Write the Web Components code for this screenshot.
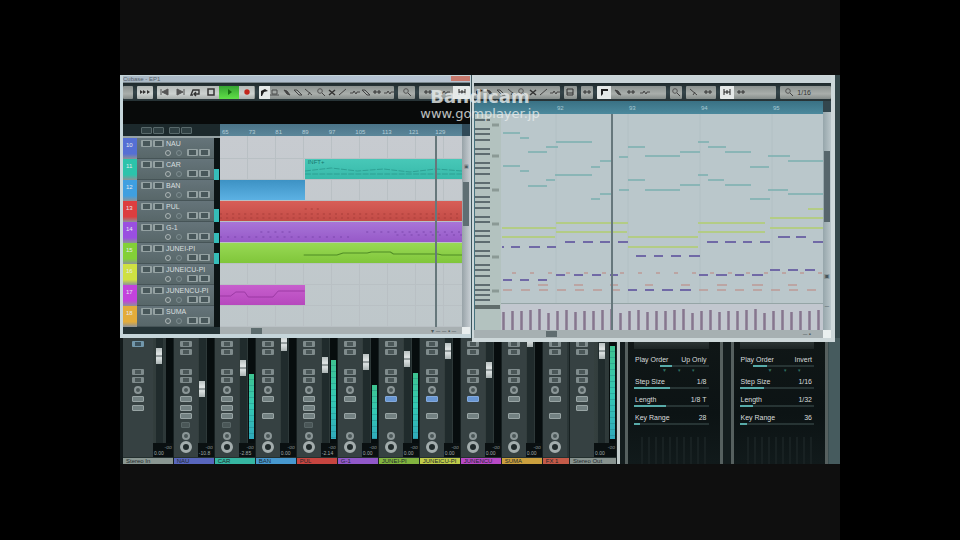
<!DOCTYPE html>
<html lang="en">
<head>
<meta charset="utf-8">
<title>Music studio</title>
<style>
html,body{margin:0;height:100%;background:#000}
body{font-family:"Liberation Sans",Arial,sans-serif;color:#dde2e2}
</style>
</head>
<body>
<studio-app></studio-app>
<script>
const BASE = `<style>
*{box-sizing:border-box}
button{appearance:none;border:0;padding:0;margin:0;background:none;font:inherit;color:inherit;display:flex;align-items:center;justify-content:center;min-width:0}
svg{display:block}
</style>`;
function define(name, render){
  customElements.define(name, class extends HTMLElement{
    constructor(){ super(); this.attachShadow({mode:'open'}); }
    connectedCallback(){ this.shadowRoot.innerHTML = BASE + render(this); }
  });
}
const ICONS = {
  ff:'<path d="M1 3v4l3-2zM4 3v4l3-2zM8 3v4l3-2z" fill="#333"/>',
  rew:'<path d="M2 2v6M9 2v6L3 5z" stroke="#555" fill="#555"/>',
  fwd:'<path d="M10 2v6M3 2v6l6-3z" stroke="#555" fill="#555"/>',
  loop:'<path d="M3 8H1l2-5h6v4H4M6 5L4 7l2 2" stroke="#333" stroke-width="1.4" fill="none"/>',
  stop:'<rect x="3" y="2" width="6" height="6" fill="none" stroke="#333" stroke-width="1.5"/>',
  play:'<path d="M5 2v6l4-3z" fill="#17700f"/>',
  rec:'<circle cx="6" cy="5" r="2.7" fill="#c3261c"/>',
  arrow:'<path d="M3 9V4l4-2 3 2-4 1-2 4z" fill="#222"/>',
  rect:'<path d="M3 3h5v4H3zM1 8h9" stroke="#4a4d4c" fill="none"/>',
  pen:'<path d="M3 3l3 1 3 4-3-1z" fill="#444" stroke="#444"/>',
  erase:'<path d="M2 3l5 5h3L5 3z" fill="none" stroke="#444"/>',
  cut:'<path d="M2 2l7 6M5 8l2-3" stroke="#444" fill="none"/>',
  zoom:'<circle cx="5" cy="4" r="2.3" fill="none" stroke="#555"/><path d="M7 6l3 3" stroke="#444"/>',
  mute:'<path d="M3 3l6 5M9 3L3 8" stroke="#333" stroke-width="1.5"/>',
  line:'<path d="M2 8l7-6" stroke="#444"/>',
  wave:'<path d="M1 6h3l1-2 2 3 1-2h3" stroke="#444" fill="none"/>',
  box:'<path d="M3 2h6v6H3zM3 6h6" stroke="#333" fill="none"/>',
  bars:'<path d="M2 5h8M4 3v4M8 3v4" stroke="#333"/>',
  note:'<path d="M3 9V2h7v2H5v3" fill="#222"/>',
  snap:'<path d="M3 2v6M9 2v6M3 5h6M6 3v4" stroke="#222" fill="none"/>',
  none:''
};
const icon = n => `<svg width="12" height="10" viewBox="0 0 12 10" aria-hidden="true">${ICONS[n]}</svg>`;

define('tool-group', el => {
  const items = el.getAttribute('items').split(' ').map(s => {
    const [n, tone] = s.split(':');
    return `<button class="${tone||''}" aria-label="${n}">${icon(n)}</button>`;
  }).join('');
  return `<style>
  :host{display:flex;flex:${el.getAttribute('grow')} 1 0;min-width:0;height:13px;border-radius:1px;overflow:hidden;background:linear-gradient(#8b9290,#a9aeab 60%,#858c8a);font-size:7px;color:#333;align-items:stretch}
  button{flex:1 1 0}
  svg{flex:none}
  .w{background:linear-gradient(#b4bab8,#cdd2d0 60%,#a8aeac)}
  .g{background:linear-gradient(#35a332,#60df48);flex-grow:1.3}
  .h{background:#e5e9e8}
  .text{display:flex;align-items:center}
  .text.on{padding-right:20px}
  </style>${items}<div class="text ${el.textContent?'on':''}"><slot></slot></div>`;
});

define('tool-bar', () => `<style>
  :host{display:flex;align-items:center;gap:4px;height:18px;background:linear-gradient(#1f2a2c,#35454a 50%,#263235);overflow:hidden}
</style><slot></slot>`);

define('track-header', el => {
  const b = '<button aria-label="option"></button>';
  return `<style>
  :host{display:grid;grid-template-columns:14px 1fr 6px;height:21px;min-width:0}
  .tag{background:linear-gradient(${el.getAttribute('color')},${el.getAttribute('color')} 75%,#8c9298);font-size:6px;line-height:8px;padding:3px 0 0 3px;color:#e4e9ee}
  .body{background:linear-gradient(#65747a,#586769);border-bottom:1px solid #465457;padding:1px 4px 1px 4px;min-width:0;overflow:hidden}
  .row{display:flex;align-items:center;gap:1px;height:9px}
  .row.two{justify-content:flex-end}
  button{width:11px;height:7px;border:2px solid #94a1a2;border-width:1px 2px;background:#48575a;border-radius:1px;flex:none}
  i{width:6px;height:6px;border:1px solid #adb6b6;border-radius:50%;margin-right:4px;flex:none}
  i+i{border-color:#7e8d90}
  .name{font-size:7px;line-height:9px;color:#d7dedf;margin-left:1px;white-space:nowrap}
  .meter{background:#0c1415;display:flex;align-items:flex-end}
  .meter b{width:5px;height:${el.getAttribute('level')}px;background:#35bdb9}
  </style><div class="tag">${el.getAttribute('n')}</div>
  <div class="body"><div class="row">${b}${b}<span class="name"><slot></slot></span></div><div class="row two"><i></i><i></i>${b}${b}</div></div>
  <div class="meter"><b></b></div>`;
});

define('track-clip', el => `<style>
  :host{display:block;height:20px;margin-left:${el.getAttribute('from')||0}%;width:${el.getAttribute('span')}%;background:linear-gradient(${el.getAttribute('c1')},${el.getAttribute('c2')});overflow:hidden;font-size:6px;line-height:7px;color:#16766f;position:relative}
  svg{position:absolute;inset:0;width:100%;height:100%}
  slot{display:block;padding-left:3px}
  </style><slot></slot><svg viewBox="0 0 240 20" preserveAspectRatio="none"><path d="${el.getAttribute('path')||''}" fill="none" stroke="${el.getAttribute('ink')}" stroke-width="1" ${el.getAttribute('dash')?`stroke-dasharray="${el.getAttribute('dash')}"`:''}/></svg>`);

define('project-window', () => {
  const T = [['NAU','#5570d4',0,'10'],['CAR','#2cc3ab',11,'11'],['BAN','#3f9fe0',0,'12'],['PUL','#dc3e3f',13,'13'],['G-1','#9a4fe0',10,'14'],['JUNEI-PI','#83d038',11,'15'],['JUNEICU-PI','#cfe043',0,'16'],['JUNENCU-PI','#c342dc',0,'17'],['SUMA','#e3ac3a',0,'18']];
  return `<style>
  :host{display:flex;flex-direction:column;background:#c5d5da;padding:1px 1px 4px 3px;position:relative;min-width:0;border-right:1px solid #3d555c}
  .title{height:7px;background:linear-gradient(90deg,#a9b8c4,#b4c3d3 70%,#b6c2cf);font-size:6px;line-height:7px;color:#56606b;display:flex;justify-content:space-between;overflow:hidden;border-bottom:1px solid #7c898f}
  .title button{width:19px;background:#c7796d;height:5px}
  .info{background:#080a0a;height:23px}
  .main{display:grid;grid-template-columns:97px 1fr 8px;background:#0c1415}
  .heads{background:#1c292c}
  .top{height:14px;display:flex;align-items:center;gap:1px;padding-left:18px;border-bottom:2px solid #96a2a4}
  .top button{width:11px;height:7px;border:1px solid #59696b;border-radius:1px;background:#2f3f42}
  .top button:nth-child(3){margin-left:4px}
  .ruler{height:12px;background:linear-gradient(#4a7488,#5b8699);display:grid;grid-template-columns:repeat(9,1fr);font-size:6px;line-height:16px;color:#b5ced8;padding-left:2px}
  .lanes{position:relative;padding-top:2px;background:repeating-linear-gradient(90deg,transparent 0 27px,#b9c0c4 27px 28px),linear-gradient(#c7cbd0,#bec7ca)}
  .lane{height:21px;border-bottom:1px solid #b9c0c4}
  .cur{position:absolute;left:89%;top:0;bottom:0;width:2px;background:#66777b}
  .vs{background:linear-gradient(90deg,#98a3a8,#c4cbd0);display:flex;flex-direction:column;align-items:center;font-size:5px;color:#4d5a60}
  .vs:before{content:"";height:12px;width:100%;background:#304a58}
  .vs b{width:6px;height:44px;background:#5f6e73;margin-top:13px}
  .hs{display:grid;grid-template-columns:97px 1fr 8px;height:7px;background:#a8b0b2}
  .hs .l{background:#253437}
  .hs .r{display:flex;align-items:center;font-size:6px;color:#4e5b5d}
  .hs .r b{margin-left:13%;width:11px;height:6px;background:#5c6b6d}
  .hs .r span{margin-left:auto;padding-right:6px}
  .hs .e{background:#e9eeee}
  .sp{height:27px}
  </style>
  <div class="title"><span>Cubase - EP1</span><button aria-label="close"></button></div>
  <tool-bar><tool-group grow="10" items="none"></tool-group><tool-group grow="16" items="ff:w"></tool-group>
  <tool-group grow="96" items="rew:w fwd:w loop:w stop:w play:g rec:w"></tool-group>
  <tool-group grow="134" items="arrow:h rect pen erase cut zoom mute line wave erase bars wave"></tool-group>
  <tool-group grow="17" items="zoom"></tool-group><tool-group grow="50" items="bars wave snap:h"></tool-group></tool-bar>
  <div class="info"></div>
  <div class="main"><div class="heads"><div class="top">${'<button aria-label="track tool"></button>'.repeat(4)}</div>
  ${T.map(t=>`<track-header color="${t[1]}" level="${t[2]}" n="${t[3]}">${t[0]}</track-header>`).join('')}</div>
  <div><div class="ruler">${[65,73,81,89,97,105,113,121,129].map(n=>`<span>${n}</span>`).join('')}</div>
  <div class="lanes"><div class="lane"></div>
  <div class="lane"><track-clip from="35" span="65" c1="#48c8b8" c2="#37b9a9" ink="#2a998d" path="M0 12L40 9 80 12 120 10 160 13 200 10 240 12M0 15H240" dash="9 2">INFT+</track-clip></div>
  <div class="lane"><track-clip span="35" c1="#3d92c4" c2="#5cb1e3" ink="#3d92c4"></track-clip></div>
  <div class="lane"><track-clip span="100" c1="#d85e57" c2="#c24b46" ink="#a93e3b" path="M84 8H102M0 13H240M0 17H240" dash="2 4"></track-clip></div>
  <div class="lane"><track-clip span="100" c1="#a875d8" c2="#9759c8" ink="#7c47ad" path="M40 10H70M145 10H240M0 15H130M175 13H240" dash="2 5"></track-clip></div>
  <div class="lane"><track-clip span="100" c1="#98d955" c2="#80c63a" ink="#4f8b25" path="M83 12H116L122 10H146L150 9H169L172 11H216L220 12H240"></track-clip></div>
  <div class="lane"></div>
  <div class="lane"><track-clip span="35" c1="#c75fcd" c2="#b648bd" ink="#8c2e94" path="M0 11H30L45 7H70L80 12H150L165 6H240"></track-clip></div>
  <div class="lane"></div><div class="cur"></div></div></div>
  <div class="vs"><div class="sp"></div>▣<b></b></div></div>
  <div class="hs"><div class="l"></div><div class="r"><b></b><span>▾ ─ ─ ▪ ─</span></div><div class="e"></div></div>`;
});

define('piano-roll', () => {
  const seg = (y, list) => list.map(([a,b]) => `M${a} ${y}H${b}`).join('');
  const every = (y, a, b, w) => { let s=''; for(let x=a;x<b;x+=18) s+=`M${x} ${y}h${w}`; return s; };
  const teal = [[133,503,520],[138,520,529],[152,528,547],[147,546,558],[142,556,592],[157,619,628],[147,628,645],[156,645,680],[152,680,700],[142,698,709],[147,708,726],[152,725,751],[167,750,769],[156,768,790],[161,788,823],[166,503,520],[171,520,529],[186,528,547],[180,546,555],[175,555,592],[167,591,600],[161,600,613],[199,591,600],[194,600,613],[190,619,629],[180,628,645],[190,645,680],[185,680,700],[175,698,708],[180,708,724],[185,725,751],[199,750,770],[190,768,788],[194,788,823]].map(([y,a,b])=>`M${a} ${y}H${b}`).join('');
  const green = seg(228,[[502,556],[770,823]])+seg(237,[[502,555],[628,698]])+seg(223,[[556,628],[698,765]])+seg(232,[[556,627],[698,765]])+'M628 247H698M770 218H823M808 209H823';
  const purple = seg(247,[[502,504],[511,520],[529,540],[547,556]])+seg(242,[[565,575],[583,593],[600,610],[618,628],[707,718],[725,736],[743,752],[760,770],[813,823]])+seg(256,[[636,646],[654,663],[671,681],[689,700]])+seg(237,[[778,790],[796,806]])
   +seg(280,[[503,512],[520,529],[538,547]])+seg(275,[[556,565],[574,583],[592,601],[610,618],[699,708],[716,727],[735,744],[752,763]])+seg(290,[[628,637],[645,654],[662,673],[680,691]])+seg(270,[[770,780],[788,798],[805,815]]);
  const red = every(290,503,620,9)+every(290,699,815,9)+seg(285,[[538,548],[574,583],[610,618],[645,653],[681,690],[717,727],[752,763],[788,797]])+every(273,512,823,4);
  let vel='', keys='', grid='';
  for(let i=0;i<36;i++) vel += `M${503.5+i*9} ${[312,310,311,311,309,310,311,313][(i*3)%8]}V330`;
  for(let L=123;L<=310;L+=34) for(const d of [3,8,17,23,28]) if(L-d>115) keys += `M0 ${L-d}H15`;
  keys += 'M0 295H15M0 300H15';
  for(let x=556;x<823;x+=72) grid += `M${x} 114V303`;
  return `<style>
  :host{display:grid;grid-template-columns:26px 1fr;height:216px;background:#b9c6c8}
  svg{width:100%;height:216px}
  </style>
  <svg viewBox="0 114 26 216" preserveAspectRatio="none"><path d="M0 114h26v216H0z" fill="#b3c2bf"/><path d="${keys}" stroke="#5e6c70" stroke-width="2"/><path d="M17 125h7M17 156h7M17 190h7M17 224h7M17 257h7M17 291h7" stroke="#8b9995" stroke-width="3"/><path d="M0 305h25v4H0z" fill="#606c6b"/></svg>
  <svg viewBox="501 114 322 216" preserveAspectRatio="none"><path d="M501 114h322v190H501z" fill="#bac7cb"/><path d="M501 304h322v26H501z" fill="#c2c7cf"/><path d="${grid}" stroke="#b2c0c4"/><path d="M501 303.5H823" stroke="#95a5a6"/>
  <path d="${teal}" stroke="#7bb0b0" stroke-width="1.4"/><path d="${green}" stroke="#b3cc85" stroke-width="2"/><path d="${red}" stroke="#bd9b96" stroke-width="1.5"/><path d="${purple}" stroke="#7069a6" stroke-width="2"/><path d="${vel}" stroke="#86768f" stroke-width="2.5"/><path d="M612 114V330" stroke="#66777c" stroke-width="2"/></svg>`;
});

define('editor-window', () => `<style>
  :host{display:flex;flex-direction:column;background:#cdd8da;padding:1px 4px 4px 2px;min-width:0}
  .title{height:7px;background:#c9d4d8}
  .main{display:grid;grid-template-columns:1fr 8px;border-left:1px solid #45727e}
  .ruler{height:13px;background:linear-gradient(#397184,#4c899d);display:grid;grid-template-columns:82px repeat(3,1fr) 50px;font-size:6px;line-height:15px;color:#a8c9d2}
  .vs{background:linear-gradient(90deg,#96a6ab,#b9c5c9);display:flex;flex-direction:column;align-items:center;font-size:6px;line-height:8px;color:#48565b}
  .vs:before{content:"";height:11px;width:100%;background:#33464d}
  .vs b{height:71px;width:6px;background:#57666c;margin:39px 0 50px}
  .vs span+span{margin-top:22px}
  .hs{display:grid;grid-template-columns:1fr 8px;height:8px;background:#a6b0b2;font-size:6px;line-height:7px;color:#4e5b5d;padding-left:25px}
  .hs div{display:flex;justify-content:space-between;padding-right:12px;align-items:center}
  .hs b{margin-left:15%;width:11px;height:6px;background:#606d70}
  .hs i{background:#eaf0f0}
  </style><div class="title"></div>
  <tool-bar><tool-group grow="88" items="arrow pen erase cut zoom mute line wave"></tool-group><tool-group grow="13" items="box"></tool-group><tool-group grow="13" items="bars"></tool-group><tool-group grow="70" items="note:h pen bars wave none"></tool-group><tool-group grow="13" items="zoom"></tool-group><tool-group grow="30" items="cut bars"></tool-group><tool-group grow="58" items="snap:h bars none none"></tool-group><tool-group grow="52" items="zoom">1/16</tool-group></tool-bar>
  <div class="main"><div><div class="ruler"><span></span><span>92</span><span>93</span><span>94</span><span>95</span></div><piano-roll></piano-roll></div><div class="vs"><b></b><span>▣</span><span>─</span></div></div>
  <div class="hs"><div><b></b><span>─ ▪</span></div><i></i></div>`);

define('mixer-strip', el => {
  const a = n => el.getAttribute(n);
  const on = s => (a('parts')||'').includes(s);
  const btn = (h, k='') => `<div style="height:${h}px"><button class="${k}" aria-label="channel switch"></button></div>`;
  const gap = h => `<div style="height:${h}px"></div>`;
  const bus = on('m');
  const fad = a('fader');
  return `<style>
  :host{display:grid;grid-template-columns:24px 1fr;grid-template-rows:119px 7px;flex:${a('grow')} 1 0;min-width:0;height:126px;background:linear-gradient(90deg,#303b3c,#35403f 52%,#293435);border-right:1px solid #172021;overflow:visible}
  :host([edge]){grid-template-columns:${a('edge')}px 1fr}
  .ch{background:#364142;display:flex;flex-direction:column;padding-top:2px;min-width:0}
  .ch div{display:flex;align-items:center;justify-content:center;flex:none}
  .ch button{width:12px;height:6px;border:1px solid #7f8b8c;border-width:1px 3px;background:#4a5657;border-radius:1px}
  .ch .f{background:#728081;border-color:#98a4a4;border-width:1px}
  .ch .b{background:#6896d2;border-color:#83a9dc;border-width:1px}
  .ch .t{background:#3c535f;border-color:#7297ab}
  .ch .d{border-color:#596667;border-width:1px;width:9px}
  .ch .k{width:8px;height:8px;border:2px solid #8b9697;border-radius:50%}
  .ch .K{width:12px;height:12px;border:3px solid #a3adad;border-radius:50%;background:#202a2b}
  .rt{display:grid;grid-template-columns:1fr 7px;grid-template-rows:105px 14px;min-width:0}
  .fw{display:flex;justify-content:center;min-width:0}
  input{appearance:none;writing-mode:vertical-lr;direction:rtl;width:7px;height:114px;margin:-8px 0 0;background:#202b2c;border:0;padding:0;flex:none}
  input::-webkit-slider-thumb{appearance:none;width:6px;height:16px;background:linear-gradient(#b8c0c0,#e2e7e7 40%,#737d7e 50%,#dde3e3 60%,#aab3b3)}
  .mt{background:#070d0e;display:flex;align-items:flex-end;justify-content:center;padding-bottom:4px}
  .mt b{width:5px;height:${a('level')||0}px;background:repeating-linear-gradient(transparent 0 5px,#1a6d7250 5px 6px),linear-gradient(#3ec390,#35c9b4 50%,#30a9bb)}
  .val{grid-column:1/3;background:#0a1011;font-size:5px;line-height:6px;color:#a1aaaa;padding:1px 0 0 1px;white-space:nowrap}
  .val span{display:block}
  .val span:first-child{text-align:right;padding-right:1px;color:#7f8989}
  .lab{grid-column:1/3;background:${a('color')};font-size:6px;line-height:6px;padding-left:3px;color:#20282c;border-top:1px solid #24302f;white-space:nowrap}
  </style>
  <div class="ch">${btn(8,on('i')?'t':'')}${on('i')?gap(8):btn(8)}${gap(12)}${btn(8)}${btn(8)}${btn(11,'k')}${btn(8,on('b')?'b':'f')}${on('s')||bus?btn(9,'f'):gap(9)}${bus?'':btn(8,'f')+(on('s')?btn(10,'d'):gap(10))+btn(11,'k')+btn(12,'K')}</div>
  ${fad?`<div class="rt"><div class="fw"><input type="range" aria-label="volume" min="0" max="98" value="${98-(fad-330)}"></div><div class="mt"><b></b></div><div class="val"><span>-oo</span><span>${a('db')||'0.00'}</span></div></div>`:'<div></div>'}
  <div class="lab"><slot></slot></div>`;
});

define('arp-panel', el => `<style>
  :host{display:block;flex:1 1 0;min-width:0;height:126px;background:linear-gradient(#101717,#0c1314 60%,#111a1b);border:solid #56605f;border-width:0 3px;padding:3px 11px 0 6px;font-size:7px;color:#d8dddd}
  .cap{height:8px;background:linear-gradient(#2e3737,#1c2424);margin-bottom:7px}
  .r{height:18px}
  .r.first{height:22px}
  .t{display:flex;justify-content:space-between;line-height:8px;height:9px;padding:0 2px 0 1px}
  input{appearance:none;display:block;width:100%;height:2px;margin:0;background:linear-gradient(90deg,transparent var(--a),#58aba9 var(--a) var(--b),#273434 var(--b))}
  input::-webkit-slider-thumb{appearance:none;width:0;height:0}
  .tri{font-size:5px;line-height:7px;color:#2e7163;display:flex;justify-content:space-between;padding:0 13px 0 28px}
  .fins{height:27px;margin:5px 2px 0;background:repeating-linear-gradient(90deg,transparent 0 5px,#182122 5px 7px)}
  </style><div class="cap"></div>
  ${el.getAttribute('rows').split(';').map((s,i)=>{const [n,v,a,b]=s.split(',');return `<div class="r ${i?'':'first'}"><div class="t"><label for="p${i}">${n}</label><span>${v}</span></div><input id="p${i}" type="range" style="--a:${a}%;--b:${b}%">${i?'':'<div class="tri"><span>▼</span><span>▾</span><span>▾</span></div>'}</div>`}).join('')}
  <div class="fins"></div>`);

define('studio-app', () => `<style>
  :host{display:block;height:100%;padding:0 12.5%;background:#000;overflow:hidden}
  .stage{height:100%;background:#0f0f0f;padding-top:75px;position:relative}
  .screen{background:#34474a}
  .wins{display:grid;grid-template-columns:352fr 363fr;align-items:start;padding-right:5px;position:relative;z-index:1}
  .low{display:grid;grid-template-columns:500fr 220fr;margin-top:-4px;background:#11191a}
  .mix{display:flex;min-width:0;padding-left:3px;border-right:3px solid #c1cbcb}
  .arps{display:flex;gap:8px;padding:0 12px 0 5px;min-width:0;background:linear-gradient(90deg,#141d1e 94%,#465b5e 95%)}
  .mark{position:absolute;z-index:2;top:87px;left:50%;translate:-50% 0;text-align:center;color:#e7ecec;opacity:.8;font:bold 18px/20px "DejaVu Sans",sans-serif}
  .mark small{display:block;font-size:13px;font-weight:400;line-height:13px}
  </style>
  <div class="stage"><div class="screen"><div class="wins"><project-window></project-window><editor-window></editor-window></div>
  <div class="low"><div class="mix">
  <mixer-strip grow="51" edge="30" parts="mi" fader="348" color="#8a9792">Stereo In</mixer-strip>
  <mixer-strip grow="41" parts="s" fader="381" db="-10.8" color="#5866bd">NAU</mixer-strip>
  <mixer-strip grow="41" parts="s" fader="360" level="65" db="-2.85" color="#36b6a2">CAR</mixer-strip>
  <mixer-strip grow="41" fader="335" color="#4798cf">BAN</mixer-strip>
  <mixer-strip grow="41" parts="s" fader="357" level="79" db="-2.14" color="#c74540">PUL</mixer-strip>
  <mixer-strip grow="41" fader="354" level="54" color="#9158c9">G-1</mixer-strip>
  <mixer-strip grow="41" parts="b" fader="351" level="66" color="#82b43f">JUNEI-PI</mixer-strip>
  <mixer-strip grow="41" parts="b" fader="343" color="#bfcb49">JUNEICU-PI</mixer-strip>
  <mixer-strip grow="41" parts="b" fader="362" color="#b849c6">JUNENCU</mixer-strip>
  <mixer-strip grow="41" fader="331" color="#cba03e">SUMA</mixer-strip>
  <mixer-strip grow="27" color="#c45a48">FX 1</mixer-strip>
  <mixer-strip grow="47" edge="24" parts="m" fader="343" level="93" color="#87928e">Stereo Out</mixer-strip>
  </div><div class="arps">
  <arp-panel rows="Play Order,Up Only,34,51;Step Size,1/8,0,48;Length,1/8 T,0,43;Key Range,28,0,8"></arp-panel>
  <arp-panel rows="Play Order,Invert,17,36;Step Size,1/16,0,33;Length,1/32,0,18;Key Range,36,0,9"></arp-panel>
  </div></div></div>
  <div class="mark">Bandicam<small>www.gomplayer.jp</small></div></div>`);
</script>
</body>
</html>
